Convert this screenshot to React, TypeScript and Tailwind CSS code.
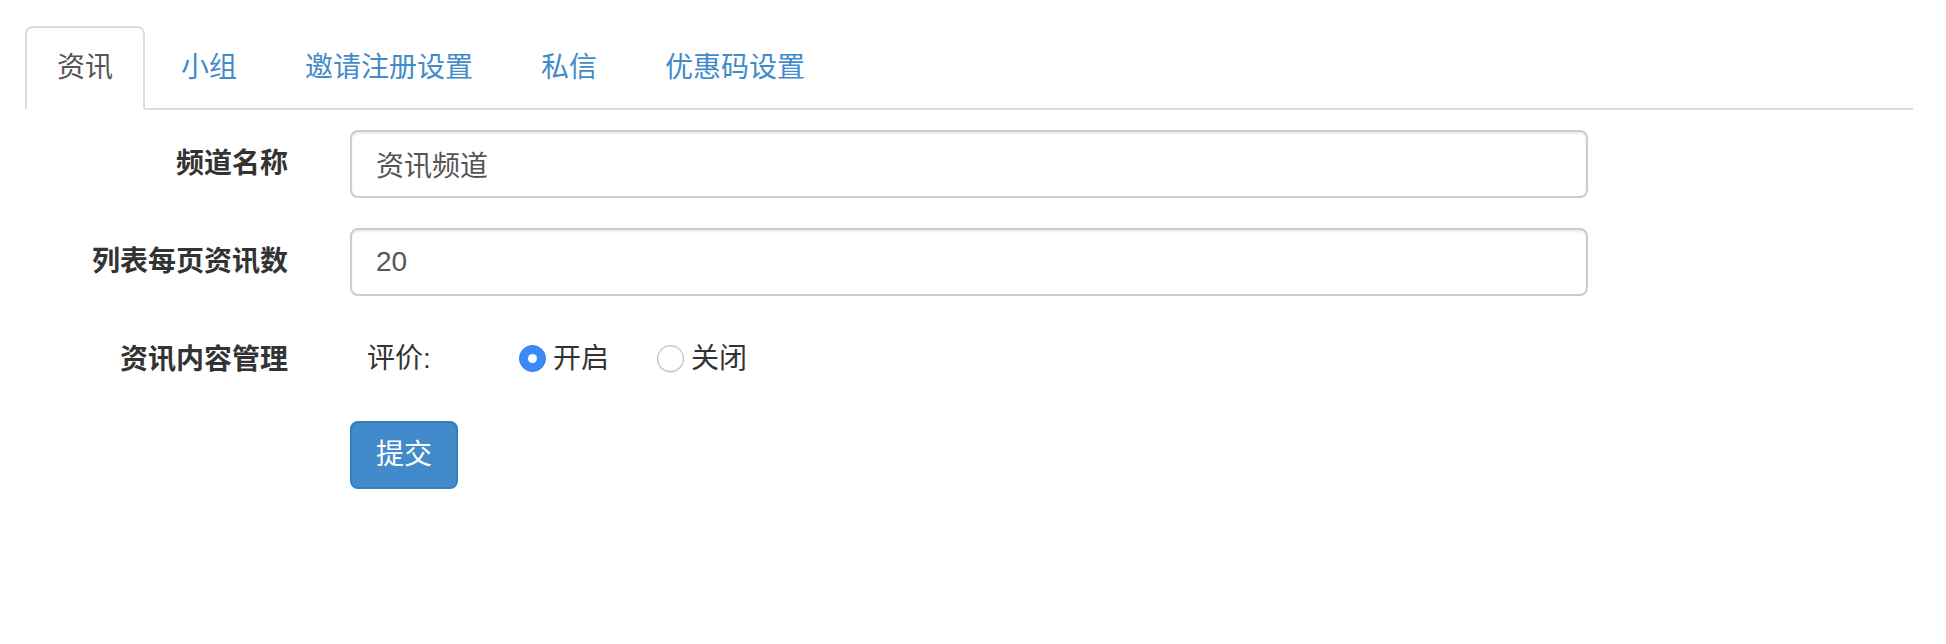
import { useState } from 'react';

const tabs = ['资讯', '小组', '邀请注册设置', '私信', '优惠码设置'];

const font = { fontFamily: '"Liberation Sans", "Noto Sans CJK SC", sans-serif' };

function Radio({ checked, label, onClick }: { checked: boolean; label: string; onClick: () => void }) {
  return (
    <label className="flex items-center cursor-pointer" onClick={onClick}>
      {checked ? (
        <span className="w-[27px] h-[27px] rounded-full bg-[#3b8af6] border border-[#3479e0] flex items-center justify-center">
          <span className="w-[9px] h-[9px] rounded-full bg-white" />
        </span>
      ) : (
        <span className="w-[27px] h-[27px] rounded-full bg-white border border-[#b5b5b5] shadow-[inset_0_1px_1px_rgba(0,0,0,0.08),0_1px_1px_rgba(0,0,0,0.1)]" />
      )}
      <span className="ml-[7px] text-[28px] leading-[40px] text-[#333]">{label}</span>
    </label>
  );
}

export default function App() {
  const [review, setReview] = useState(true);

  return (
    <div className="min-h-screen bg-white pt-[26px] pl-[25px] pr-[33px]" style={font}>
      {/* Tabs */}
      <ul className="flex border-b-2 border-[#ddd]">
        {tabs.map((t, i) => (
          <li key={t} className="-mb-[2px] mr-[4px]">
            <a
              className={
                i === 0
                  ? 'block px-[30px] py-[20px] leading-[40px] text-[28px] border-2 border-[#ddd] border-b-white rounded-t-[8px] bg-white text-[#555]'
                  : 'block px-[30px] py-[20px] leading-[40px] text-[28px] border-2 border-transparent rounded-t-[8px] text-[#428bca]'
              }
            >
              {t}
            </a>
          </li>
        ))}
      </ul>

      {/* Form */}
      <div className="mt-[20px]">
        <div className="flex mb-[30px]">
          <div className="w-[263px] shrink-0 pt-[14px] leading-[40px] text-[28px] font-bold text-[#333] text-right">频道名称</div>
          <input
            className="ml-[62px] w-[1238px] h-[68px] px-[24px] text-[28px] text-[#555] border-2 border-[#ccc] rounded-[8px] shadow-[inset_0_2px_2px_rgba(0,0,0,0.075)] outline-none"
            defaultValue="资讯频道"
            style={font}
          />
        </div>
        <div className="flex mb-[30px]">
          <div className="w-[263px] shrink-0 pt-[14px] leading-[40px] text-[28px] font-bold text-[#333] text-right">列表每页资讯数</div>
          <input
            className="ml-[62px] w-[1238px] h-[68px] px-[24px] text-[28px] text-[#555] border-2 border-[#ccc] rounded-[8px] shadow-[inset_0_2px_2px_rgba(0,0,0,0.075)] outline-none"
            defaultValue="20"
            style={font}
          />
        </div>
        <div className="flex mb-[41px]">
          <div className="w-[263px] shrink-0 pt-[14px] leading-[40px] text-[28px] font-bold text-[#333] text-right">资讯内容管理</div>
          <div className="ml-[79px] pt-[11px] flex items-center">
            <span className="text-[28px] leading-[40px] text-[#333] w-[152px]">评价:</span>
            <Radio checked={review} label="开启" onClick={() => setReview(true)} />
            <div className="ml-[48px]">
              <Radio checked={!review} label="关闭" onClick={() => setReview(false)} />
            </div>
          </div>
        </div>
        <div className="pl-[325px]">
          <button className="h-[68px] px-[24px] text-[28px] leading-[40px] text-white bg-[#428bca] border-2 border-[#357ebd] rounded-[8px]" style={font}>
            提交
          </button>
        </div>
      </div>
    </div>
  );
}
